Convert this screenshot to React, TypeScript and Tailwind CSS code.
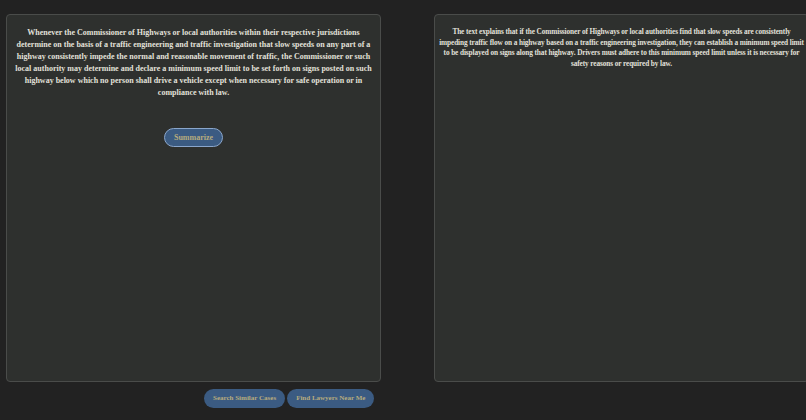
import React from "react";

export default function App() {
  const serif = { fontFamily: '"Liberation Serif", "Times New Roman", serif' };
  return (
    <div className="w-[806px] h-[420px] overflow-hidden bg-[#222222]" style={serif}>
      <div className="flex gap-[53px] pl-[6px] pt-[14px]">
        <div className="w-[375px] h-[368px] shrink-0 rounded-[4px] border border-[#4a4c4a] bg-[#2e302e] flex flex-col items-center px-[6px] pt-[12px]">
          <p className="text-center font-bold text-[8px] leading-[12px] text-[#e2e0da]">
            Whenever the Commissioner of Highways or local authorities within their respective jurisdictions determine on the basis of a traffic engineering and traffic investigation that slow speeds on any part of a highway consistently impede the normal and reasonable movement of traffic, the Commissioner or such local authority may determine and declare a minimum speed limit to be set forth on signs posted on such highway below which no person shall drive a vehicle except when necessary for safe operation or in compliance with law.
          </p>
          <button className="mt-[29px] h-[19px] px-[9px] rounded-full border border-[#8aa6cc] bg-[#3b5b82] text-[8px] font-bold text-[#b7ab7e]">
            Summarize
          </button>
        </div>
        <div className="w-[375px] h-[368px] shrink-0 rounded-[4px] border border-[#4a4c4a] bg-[#2e302e] px-[2px] pt-[12px]">
          <p className="text-center font-bold text-[7.3px] leading-[10.7px] tracking-[-0.1px] text-[#e2e0da]">
            The text explains that if the Commissioner of Highways or local authorities find that slow speeds are consistently
            <br />
            impeding traffic flow on a highway based on a traffic engineering investigation, they can establish a minimum speed limit
            <br />
            to be displayed on signs along that highway. Drivers must adhere to this minimum speed limit unless it is necessary for
            <br />
            safety reasons or required by law.
          </p>
        </div>
      </div>
      <div className="flex gap-[2px] pl-[204px] mt-[7px]">
        <button className="h-[19px] px-[9px] rounded-full bg-[#3b5b82] text-[7px] font-bold text-[#b7ab7e]">
          Search Similar Cases
        </button>
        <button className="h-[19px] px-[9px] rounded-full bg-[#3b5b82] text-[7px] font-bold text-[#b7ab7e]">
          Find Lawyers Near Me
        </button>
      </div>
    </div>
  );
}
